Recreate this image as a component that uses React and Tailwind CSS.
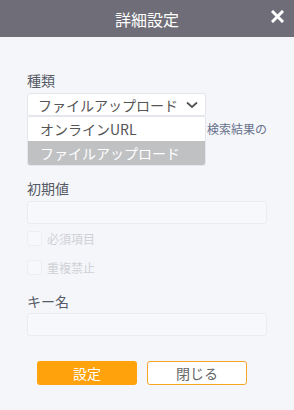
export default function App() {
    const font = { fontFamily: '"Noto Sans CJK JP", "Noto Sans", sans-serif' };

    return (
        <div className="w-[294px] h-[410px] bg-[#f5f6fa] flex flex-col overflow-hidden" style={font}>
            <div className="h-[37px] bg-[#6f6e78] relative flex items-center justify-center shrink-0">
                <span className="text-white text-[16px] leading-none">詳細設定</span>
                <svg className="absolute right-[10px] top-[10px]" width="13" height="13" viewBox="0 0 13 13">
                    <path d="M2 2 L11 11 M11 2 L2 11" stroke="#ffffff" strokeWidth="3" strokeLinecap="square" />
                </svg>
            </div>

            <div className="px-[27px] pt-[35px] flex flex-col">
                <div className="text-[14px] leading-[16px] text-[#555a66]">種類</div>
                <div className="relative mt-[5px] h-[48px]">
                    <div className="w-[179px] h-[23px] bg-white border border-[#e4e6ec] rounded-[3px] flex items-center justify-between pl-[10px] pr-[7px]">
                        <span className="text-[14px] text-[#555] leading-none">ファイルアップロード</span>
                        <svg width="12" height="8" viewBox="0 0 12 8">
                            <path d="M1 1.5 L6 6 L11 1.5" fill="none" stroke="#555" strokeWidth="1.8" />
                        </svg>
                    </div>
                    <div className="absolute left-[180px] top-[30px] text-[12px] leading-none text-[#67728c] whitespace-nowrap">検索結果の</div>
                    <div className="absolute left-0 top-[23px] w-[179px] bg-white border border-[#e4e6ec] rounded-b-[3px] overflow-hidden">
                        <div className="h-[24px] flex items-center pl-[12px] text-[14px] text-[#555] leading-none">オンラインURL</div>
                        <div className="h-[24px] flex items-center pl-[12px] text-[14px] text-white bg-[#c0c1c3] leading-none">ファイルアップロード</div>
                    </div>
                </div>

                <div className="mt-[39px] text-[14px] leading-[16px] text-[#555a66]">初期値</div>
                <div className="mt-[5px] h-[23px] w-[240px] bg-[#f7f8fc] border border-[#eaecf1] rounded-[3px]"></div>

                <div className="mt-[7px] flex items-center gap-[5px] h-[15px]">
                    <div className="w-[15px] h-[15px] border border-[#eceef2] rounded-[3px] bg-[#f7f8fc]"></div>
                    <span className="text-[12px] text-[#cfd1d6] leading-none">必須項目</span>
                </div>
                <div className="mt-[14px] flex items-center gap-[5px] h-[15px]">
                    <div className="w-[15px] h-[15px] border border-[#eceef2] rounded-[3px] bg-[#f7f8fc]"></div>
                    <span className="text-[12px] text-[#cfd1d6] leading-none">重複禁止</span>
                </div>

                <div className="mt-[18px] text-[14px] leading-[16px] text-[#555a66]">キー名</div>
                <div className="mt-[4px] h-[23px] w-[240px] bg-[#f7f8fc] border border-[#eaecf1] rounded-[3px]"></div>

                <div className="mt-[25px] flex gap-[10px] pl-[10px]">
                    <button className="w-[100px] h-[24px] bg-[#ffa20c] rounded-[3px] text-white text-[14px] leading-none">設定</button>
                    <button className="w-[100px] h-[24px] bg-white border border-[#f5a623] rounded-[3px] text-[#666] text-[14px] leading-none">閉じる</button>
                </div>
            </div>
        </div>
    );
}
